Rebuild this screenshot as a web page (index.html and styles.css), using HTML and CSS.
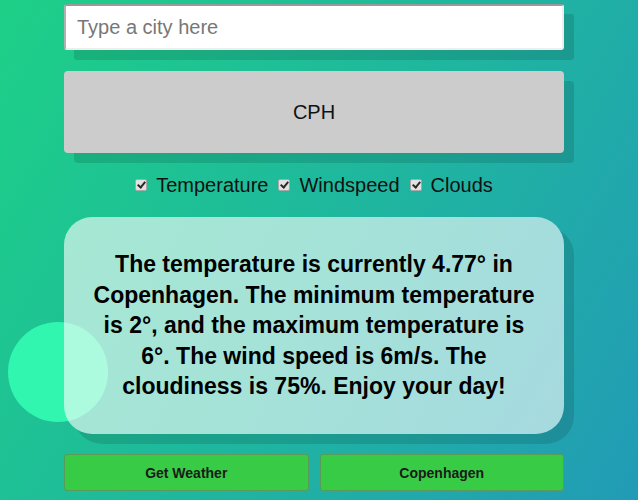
FILE: index.html
```html
<!DOCTYPE html>
<html>
<head>
<meta charset="utf-8">
<link rel="stylesheet" href="styles.css">
</head>
<body>
<div class="bubble"></div>
<main class="app">
  <input class="city" type="text" placeholder="Type a city here">
  <button class="cph">CPH</button>
  <div class="options">
    <label class="opt"><span class="box"></span>Temperature</label>
    <label class="opt"><span class="box"></span>Windspeed</label>
    <label class="opt"><span class="box"></span>Clouds</label>
  </div>
  <section class="card">
    <p>The temperature is currently 4.77° in Copenhagen. The minimum temperature is 2°, and the maximum temperature is 6°. The wind speed is 6m/s. The cloudiness is 75%. Enjoy your day!</p>
  </section>
  <div class="actions">
    <button class="green">Get Weather</button>
    <button class="green">Copenhagen</button>
  </div>
</main>
</body>
</html>
```
FILE: styles.css
```css
html, body {
  margin: 0;
  height: 100%;
}
body {
  background: linear-gradient(120deg, #1dd087 0%, #1fb5a0 55%, #229bb6 100%);
  font-family: "Liberation Sans", Arial, sans-serif;
  overflow: hidden;
  position: relative;
}
.bubble {
  position: absolute;
  left: 8px;
  top: 322px;
  width: 100px;
  height: 100px;
  border-radius: 50%;
  background: #30f6b0;
}
.app {
  position: relative;
  width: 500px;
  margin: 0 auto;
  padding: 4px 10px 0 0;
  display: flex;
  flex-direction: column;
}
.city {
  box-sizing: border-box;
  height: 46px;
  width: 100%;
  border: 2px solid #fff;
  border-top-color: #9a9a9a;
  border-left-color: #b0b0b0;
  border-bottom-color: #eee;
  border-right-color: #eee;
  border-radius: 3px;
  padding: 0 11px;
  font-family: "Liberation Sans", Arial, sans-serif;
  font-size: 20px;
  background: #fff;
  box-shadow: 10px 10px 0 rgba(0, 0, 0, 0.12);
  outline: none;
}
.city::placeholder {
  color: #777;
}
.cph {
  margin-top: 21px;
  height: 82px;
  border: none;
  border-radius: 4px;
  background: #cccccc;
  font-family: "Liberation Sans", Arial, sans-serif;
  font-size: 20px;
  color: #111;
  box-shadow: 10px 10px 0 rgba(0, 0, 0, 0.12);
}
.options {
  display: flex;
  justify-content: center;
  align-items: center;
  gap: 10px;
  height: 64px;
  font-size: 20px;
  color: #111;
}
.opt {
  display: flex;
  align-items: center;
  gap: 9px;
}
.box {
  box-sizing: border-box;
  width: 12px;
  height: 12px;
  border: 1px solid #a8a8a8;
  border-radius: 2px;
  background: #e2e2e2;
  position: relative;
}
.box::after {
  content: "";
  position: absolute;
  left: 3px;
  top: 0px;
  width: 3px;
  height: 6px;
  border: solid #2a2a2a;
  border-width: 0 2px 2px 0;
  transform: rotate(40deg);
}
.card {
  height: 217px;
  box-sizing: border-box;
  border-radius: 28px;
  background: rgba(255, 255, 255, 0.6);
  box-shadow: 10px 10px 0 rgba(0, 0, 0, 0.12);
  display: flex;
  align-items: center;
  justify-content: center;
  padding: 0 26px;
}
.card p {
  margin: 0;
  text-align: center;
  font-weight: bold;
  font-size: 23px;
  line-height: 30.5px;
  color: #000;
}
.actions {
  margin-top: 20px;
  display: grid;
  grid-template-columns: 1fr 1fr;
  gap: 11px;
}
.green {
  height: 37px;
  border: 1px solid #5a9a5a;
  border-radius: 3px;
  background: #38cc46;
  font-family: "Liberation Sans", Arial, sans-serif;
  font-weight: bold;
  font-size: 14px;
  color: #1a1a1a;
}
```
